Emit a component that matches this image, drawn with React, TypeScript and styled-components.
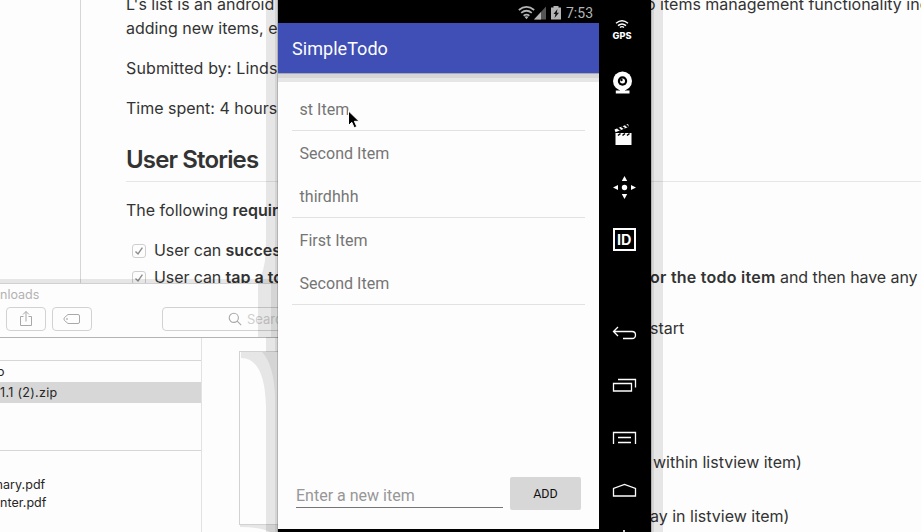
import React from "react";
import styled, { createGlobalStyle } from "styled-components";

const Global = createGlobalStyle`
  * { box-sizing: border-box; }
  html, body { margin: 0; padding: 0; overflow: hidden; }
`;

const Desktop = styled.div`
  position: relative;
  width: 921px;
  height: 532px;
  overflow: hidden;
  background: #fdfdfd;
`;

/* README page in the browser behind the other windows */

const Readme = styled.main`
  margin-left: 80px;
  height: 532px;
  padding-left: 45px;
  border-left: 1px solid #d6d6d6;
  font: 16px/24px Inter, "Liberation Sans", sans-serif;
  color: #333;
  white-space: pre;
  overflow: hidden;
`;

const Line = styled.div<{ $gap?: number }>`
  display: flex;
  height: 24px;
  margin-bottom: ${(p) => p.$gap ?? 16}px;
`;

const FirstLine = styled(Line)`
  margin-top: -8px;
`;

const Lead = styled.div<{ $width: number }>`
  flex: none;
  display: flex;
  width: ${(p) => p.$width}px;
`;

const Txt = styled.span<{ $ls?: number; $bold?: boolean }>`
  flex: none;
  letter-spacing: ${(p) => p.$ls ?? 0}px;
  font-weight: ${(p) => (p.$bold ? 600 : 400)};
`;

const Heading = styled.h2`
  margin: 24px 0 16px;
  height: 38px;
  font-size: 24px;
  line-height: 32px;
  font-weight: 600;
  letter-spacing: -0.85px;
  border-bottom: 1px solid #e6e6e6;
`;

const CheckBox = styled.span`
  flex: none;
  display: flex;
  align-items: center;
  justify-content: center;
  width: 14px;
  height: 14px;
  margin: 6px 8px 0 6px;
  border: 1px solid #cfcfcf;
  border-radius: 3px;
`;

const Check = () => (
  <CheckBox>
    <svg width="10" height="10" viewBox="0 0 10 10" fill="none" stroke="#8c8c8c" strokeWidth="1.4">
      <path d="M1.5 5.6 4 8 8.4 1.6" />
    </svg>
  </CheckBox>
);

/* Finder window */

const Finder = styled.section`
  position: absolute;
  left: 0;
  top: 283px;
  width: 278px;
  height: 249px;
  display: flex;
  flex-direction: column;
  background: #fdfdfd;
  border-top: 1px solid #d0d0d0;
  box-shadow: 0 -4px 0 rgba(0, 0, 0, 0.09);
  font: 12.5px/18px Inter, "Liberation Sans", sans-serif;
  color: #262626;
  white-space: pre;
`;

const FinderHead = styled.header`
  height: 54px;
  border-bottom: 1px solid #b4b4b4;
`;

const FinderTitle = styled.div`
  height: 23px;
  line-height: 22px;
  color: #b2b2b2;
`;

const FinderTools = styled.div`
  display: flex;
  padding-left: 6px;
  overflow: hidden;
`;

const ToolButton = styled.div`
  flex: none;
  display: flex;
  align-items: center;
  justify-content: center;
  width: 40px;
  height: 24px;
  margin-right: 6px;
  border: 1px solid #d2d2d2;
  border-radius: 4px;
`;

const SearchField = styled.div`
  flex: none;
  display: flex;
  align-items: center;
  width: 180px;
  height: 24px;
  margin-left: 64px;
  padding-left: 65px;
  gap: 5px;
  border: 1px solid #d2d2d2;
  border-radius: 4px;
  color: #cfcfcf;
  font-size: 13px;
`;

const FinderBody = styled.div`
  flex: 1;
  display: flex;
`;

const FileList = styled.div`
  width: 202px;
  border-right: 1px solid #e2e2e2;
`;

const FileGap = styled.div<{ $h: number }>`
  height: ${(p) => p.$h}px;
  border-bottom: 1px solid #d6d6d6;
`;

const FileRow = styled.div<{ $h: number; $selected?: boolean; $top?: number; $indent?: number }>`
  height: ${(p) => p.$h}px;
  line-height: ${(p) => p.$h + 1}px;
  margin-top: ${(p) => p.$top ?? 0}px;
  text-indent: ${(p) => p.$indent ?? 0}px;
  letter-spacing: ${(p) => (p.$selected ? 0.3 : 0.05)}px;
  background: ${(p) => (p.$selected ? "#d7d7d7" : "transparent")};
`;

const Preview = styled.div`
  flex: 1;
  height: 174px;
  margin: 13px 0 0 37px;
  border: solid #d2d2d2;
  border-width: 1px 0 1px 1px;
`;

/* Soft shadows the emulator casts on the windows behind it */

const Shadows = styled.svg`
  position: absolute;
  left: 0;
  top: 0;
`;

/* Emulator */

const Emulator = styled.section`
  position: absolute;
  left: 278px;
  top: 0;
  width: 373px;
  height: 532px;
  display: flex;
  background: #000;
  font-family: Roboto, sans-serif;
  white-space: pre;
`;

const Screen = styled.div`
  width: 321px;
  height: 529px;
  display: flex;
  flex-direction: column;
  background: #fdfdfd;
`;

const StatusBar = styled.div`
  display: flex;
  justify-content: flex-end;
  align-items: center;
  height: 23px;
  padding: 2px 6px 0 0;
  background: #000;
  color: #b4b4b4;
  font-size: 14px;
`;

const StatusIcons = styled.svg`
  margin-right: 4px;
`;

const AppBar = styled.header`
  height: 59px;
  padding-left: 14px;
  background: #3f4fb5;
  color: #fdfdfd;
  font-size: 18px;
  line-height: 52px;
  letter-spacing: 0.05px;
  border-bottom: 4px solid #e6e6e6;
  box-shadow: inset 0 -4px 0 #d6d6d6, inset 0 -5px 0 #a8a8b4;
`;

const List = styled.ul`
  flex: 1;
  margin: 5px 14px 0;
  padding: 0;
  list-style: none;
`;

const Item = styled.li<{ $ruled?: boolean }>`
  height: ${(p) => (p.$ruled ? 44 : 43)}px;
  padding-left: 7.5px;
  line-height: 46px;
  font-size: 16px;
  letter-spacing: 0.04px;
  color: #757575;
  border-bottom: ${(p) => (p.$ruled ? "1px solid #e2e2e2" : "none")};
`;

const EntryRow = styled.div`
  display: flex;
  align-items: flex-end;
  gap: 7px;
  height: 33px;
  margin: 0 18px 19px;
`;

const Entry = styled.div`
  width: 207px;
  height: 26px;
  margin-bottom: 2px;
  line-height: 27px;
  font-size: 16px;
  color: #979797;
  border-bottom: 1px solid #757575;
`;

const AddButton = styled.button`
  width: 71px;
  height: 33px;
  padding: 0;
  border: 0;
  border-radius: 2px;
  background: #d7d7d7;
  color: #111;
  font: 400 12.5px Roboto, sans-serif;
`;

const Rail = styled.nav`
  width: 52px;
  display: flex;
  flex-direction: column;
  padding-top: 4px;
  overflow: hidden;
`;

const Slot = styled.div<{ $gap?: number; $shift?: number }>`
  flex: none;
  display: flex;
  align-items: center;
  justify-content: center;
  height: 52.3px;
  margin-top: ${(p) => p.$gap ?? 0}px;
  padding-right: ${(p) => p.$shift ?? 2}px;
`;

const Pointer = styled.svg`
  position: absolute;
  left: 347px;
  top: 109px;
`;

const Glyph = ({ children }: { children: React.ReactNode }) => (
  <svg width="26" height="26" viewBox="0 0 26 26" fill="none" stroke="#fdfdfd" strokeWidth="1.3">
    {children}
  </svg>
);

const items = ["st Item", "Second Item", "thirdhhh", "First Item", "Second Item"];

export default function App() {
  return (
    <Desktop>
      <Global />
      <Readme>
        <FirstLine $gap={0}>
          <Lead $width={520}><Txt>L's list is an android</Txt></Lead>
          <Txt>o items management functionality inc</Txt>
        </FirstLine>
        <Line><Txt>adding new items, e</Txt></Line>
        <Line><Txt $ls={0.12}>Submitted by: Linds</Txt></Line>
        <Line><Txt>Time spent: 4 hours</Txt></Line>
        <Heading>User Stories</Heading>
        <Line><Txt>The following </Txt><Txt $bold>requir</Txt></Line>
        <Line $gap={3}>
          <Check /><Txt $ls={-0.1}>User can </Txt><Txt $bold>succes</Txt>
        </Line>
        <Line $gap={27}>
          <Lead $width={524}><Check /><Txt $ls={-0.1}>User can </Txt><Txt $bold>tap a to</Txt></Lead>
          <Txt $bold $ls={0.25}>or the todo item</Txt><Txt $ls={-0.07}> and then have any</Txt>
        </Line>
        <Line $gap={110}><Lead $width={524} /><Txt>start</Txt></Line>
        <Line $gap={30}><Lead $width={527} /><Txt>within listview item)</Txt></Line>
        <Line><Lead $width={524} /><Txt>ay in listview item)</Txt></Line>
      </Readme>

      <Finder>
        <FinderHead>
          <FinderTitle>nloads</FinderTitle>
          <FinderTools>
            <ToolButton>
              <svg width="14" height="16" viewBox="0 0 14 16" fill="none" stroke="#a8a8a8">
                <path d="M4.5 5.5h-3v9h11v-9h-3M7 10.5v-10M4 3.5l3-3 3 3" />
              </svg>
            </ToolButton>
            <ToolButton>
              <svg width="18" height="12" viewBox="0 0 18 12" fill="none" stroke="#a8a8a8">
                <path d="M5 1.5h10q1.5 0 1.500 1.500v6q0 1.500-1.500 1.500H5L1.500 7.500q-1.200-1.500 0-3z" />
                <circle cx="4" cy="6" r=".5" />
              </svg>
            </ToolButton>
            <SearchField>
              <svg width="14" height="14" viewBox="0 0 14 14" fill="none" stroke="#a8a8a8" strokeWidth="1.1">
                <circle cx="5.8" cy="5.8" r="4.6" />
                <path d="m9.2 9.2 4 4" />
              </svg>
              Search
            </SearchField>
          </FinderTools>
        </FinderHead>
        <FinderBody>
          <FileList>
            <FileGap $h={23} />
            <FileRow $h={21} $indent={-3}>o</FileRow>
            <FileRow $h={21} $selected>1.1 (2).zip</FileRow>
            <FileGap $h={48} />
            <FileRow $h={18} $top={24} $indent={-8}>mary.pdf</FileRow>
            <FileRow $h={18}>nter.pdf</FileRow>
          </FileList>
          <Preview />
        </FinderBody>
      </Finder>

      <Shadows width="921" height="532">
        <g fill="#000" fillOpacity=".09">
          <path d="M266 0h12v532h-12zM266 250q-1 20-8 33v54h8z" />
          <path d="M651 0h12v532h-12z" />
          <path d="M241 352h25v56q-1-50-25-50z" />
          <path d="M240 525h38v7h-8q-8-5-30-5z" />
        </g>
        <g fill="#000" fillOpacity=".07">
          <path d="M275 0h3v532h-3zM275 255v28h-4v54h4z" />
          <path d="M651 0h3v532h-3zM262 352h13v45q-1-32-13-45z" />
        </g>
        <path d="M277 0h1v532h-1zM651 0h1v532h-1z" fill="#000" fillOpacity=".16" />
      </Shadows>

      <Emulator>
        <Screen>
          <StatusBar>
            <StatusIcons width="44" height="14" viewBox="0 0 44 14">
              <g fill="none" stroke="#b4b4b4" strokeWidth="1.7">
                <path d="M.8 4Q8.5-2.2 16.2 4M3.2 6.9Q8.5 2.6 13.8 6.9M5.6 9.7Q8.5 7.6 11.4 9.7" />
              </g>
              <path d="m6.5 10.8 2 2.4 2-2.4q-2-1.3-4 0z" fill="#b4b4b4" />
              <path d="M16 13.5 28 .5v13z" fill="#555" />
              <path d="m16 13.5 7-7.6v7.6z" fill="#b4b4b4" />
              <path d="M33 1.5h2.5V0h5v1.5H43v12H33z" fill="#b4b4b4" />
              <path d="m39.5 3-4 5h2l-1 4 4.5-5.3h-2.2z" fill="#111" />
            </StatusIcons>
            7:53
          </StatusBar>
          <AppBar>SimpleTodo</AppBar>
          <List>
            {items.map((label, i) => (
              <Item key={i} $ruled={i % 2 === 0}>{label}</Item>
            ))}
          </List>
          <EntryRow>
            <Entry>Enter a new item</Entry>
            <AddButton>ADD</AddButton>
          </EntryRow>
        </Screen>
        <Rail>
          <Slot $shift={4}>
            <svg width="24" height="24" viewBox="0 0 24 24" fill="none" stroke="#fdfdfd">
              <path d="M5 5.2Q11 .2 17 5.2M7 7.6Q11 4.2 15 7.6M9 9.6Q11 7.6 13 9.6" strokeWidth="1.4" />
              <text x="1.5" y="20.5" fill="#fdfdfd" stroke="none" fontFamily="Inter, sans-serif" fontWeight="800" fontSize="8.500" textLength="19" lengthAdjust="spacingAndGlyphs">GPS</text>
            </svg>
          </Slot>
          <Slot $shift={4}>
            <svg width="24" height="24" viewBox="0 0 24 24" fill="#fdfdfd">
              <circle cx="11.500" cy="11" r="9.500" />
              <circle cx="11.500" cy="11" r="4.700" fill="#000" />
              <circle cx="11.500" cy="11" r="2.500" />
              <circle cx="10.500" cy="10" r="1.200" fill="#000" />
              <path d="M9 18.500h5v2h4.500v3H4.800v-3H9z" />
            </svg>
          </Slot>
          <Slot $shift={4}>
            <svg width="24" height="24" viewBox="0 0 24 24" fill="#fdfdfd">
              <path d="M4.500 10h16v12h-16zM3.500 6.500 17 1l1 2.700L4.500 9.200z" />
              <path d="m6.500 5 3 2M10.500 3.500l3 2M14.500 2l3 2M9.500 10.500 7 12.500M14 10.500l-2.500 2M18.500 10.500l-2.500 2" stroke="#000" strokeWidth="1.600" />
            </svg>
          </Slot>
          <Slot>
            <Glyph>
              <g fill="#fdfdfd" stroke="none">
                <circle cx="13.500" cy="13.500" r="2.700" />
                <path d="m13.500 2 2.700 5h-5.400zM13.500 25l2.700-5h-5.400zM2 13.500 7 11v5zM25 13.500 20 11v5z" />
              </g>
            </Glyph>
          </Slot>
          <Slot>
            <Glyph>
              <rect x="3" y="3" width="21" height="21" strokeWidth="2" />
              <text x="6" y="18.700" fill="#fdfdfd" stroke="none" fontFamily="Inter, sans-serif" fontWeight="700" fontSize="14" textLength="14.500" lengthAdjust="spacingAndGlyphs">ID</text>
            </Glyph>
          </Slot>
          <Slot $gap={41.5}>
            <Glyph>
              <path d="M7 7 2.500 11.500 7 16M2.500 11.500h18.500q3.500 0 3.500 3.500t-3.500 3.500h-9" />
            </Glyph>
          </Slot>
          <Slot>
            <Glyph>
              <path d="M2.500 11.500h18v7.500h-18zM7 7.500h17.500v8" />
            </Glyph>
          </Slot>
          <Slot>
            <Glyph>
              <path d="M2.500 19V7.500h22V19M7 12.500h13M7 17.500h13" />
            </Glyph>
          </Slot>
          <Slot>
            <Glyph>
              <path d="M2.500 19v-7.500l11-4 11 4V19z" />
            </Glyph>
          </Slot>
          <Slot>
            <Glyph>
              <path d="M13 1v11M7 5a9 9 0 1 0 12 0" strokeWidth="1.600" />
            </Glyph>
          </Slot>
        </Rail>
      </Emulator>

      <Pointer width="14" height="21" viewBox="0 0 14 21">
        <path d="M1.500 2v14.500l3.300-3.200 2.400 5.500 2.600-1.200-2.400-5.300h4.700z" fill="#000" stroke="#fff" strokeWidth="1" />
      </Pointer>
    </Desktop>
  );
}
